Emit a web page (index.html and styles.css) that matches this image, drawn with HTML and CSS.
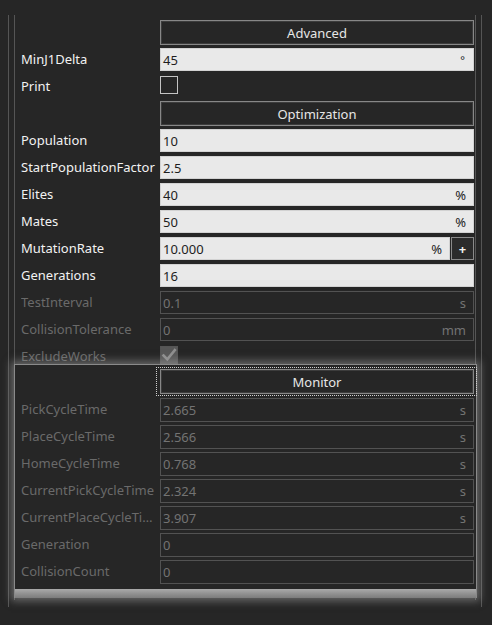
FILE: index.html
```html
<!DOCTYPE html>
<html>
<head>
<meta charset="utf-8">
<link rel="stylesheet" href="styles.css">
</head>
<body>
<div class="outer">
  <div class="inner">
    <div class="row">
      <div class="lbl"></div>
      <div class="hdr">Advanced</div>
    </div>
    <div class="row">
      <div class="lbl">MinJ1Delta</div>
      <div class="field light"><span class="val">45</span><span class="unit deg">°</span></div>
    </div>
    <div class="row">
      <div class="lbl">Print</div>
      <div class="cell"><div class="chk"></div></div>
    </div>
    <div class="row">
      <div class="lbl"></div>
      <div class="hdr">Optimization</div>
    </div>
    <div class="row">
      <div class="lbl">Population</div>
      <div class="field light"><span class="val">10</span></div>
    </div>
    <div class="row">
      <div class="lbl">StartPopulationFactor</div>
      <div class="field light"><span class="val">2.5</span></div>
    </div>
    <div class="row">
      <div class="lbl">Elites</div>
      <div class="field light"><span class="val">40</span><span class="unit">%</span></div>
    </div>
    <div class="row">
      <div class="lbl">Mates</div>
      <div class="field light"><span class="val">50</span><span class="unit">%</span></div>
    </div>
    <div class="row">
      <div class="lbl">MutationRate</div>
      <div class="cell split">
        <div class="field light grow"><span class="val">10.000</span><span class="unit">%</span></div>
        <div class="plus">+</div>
      </div>
    </div>
    <div class="row">
      <div class="lbl">Generations</div>
      <div class="field light"><span class="val">16</span></div>
    </div>
    <div class="row">
      <div class="lbl off">TestInterval</div>
      <div class="field dark"><span class="val">0.1</span><span class="unit">s</span></div>
    </div>
    <div class="row">
      <div class="lbl off">CollisionTolerance</div>
      <div class="field dark"><span class="val">0</span><span class="unit">mm</span></div>
    </div>
    <div class="row">
      <div class="lbl off">ExcludeWorks</div>
      <div class="cell">
        <div class="chk dis">
          <svg width="18" height="18" viewBox="0 0 18 18"><path d="M3.5 9.5 L7.3 13.3 L14.8 4.2" fill="none" stroke="#8f8f8f" stroke-width="2.6" stroke-linecap="square"/></svg>
        </div>
      </div>
    </div>

    <div class="panel">
      <div class="row prow-head">
        <div class="lbl"></div>
        <div class="hdr focus">Monitor</div>
      </div>
      <div class="row">
        <div class="lbl off">PickCycleTime</div>
        <div class="field dark tall"><span class="val">2.665</span><span class="unit">s</span></div>
      </div>
      <div class="row">
        <div class="lbl off">PlaceCycleTime</div>
        <div class="field dark tall"><span class="val">2.566</span><span class="unit">s</span></div>
      </div>
      <div class="row">
        <div class="lbl off">HomeCycleTime</div>
        <div class="field dark tall"><span class="val">0.768</span><span class="unit">s</span></div>
      </div>
      <div class="row">
        <div class="lbl off">CurrentPickCycleTime</div>
        <div class="field dark tall"><span class="val">2.324</span><span class="unit">s</span></div>
      </div>
      <div class="row">
        <div class="lbl off">CurrentPlaceCycleTime</div>
        <div class="field dark tall"><span class="val">3.907</span><span class="unit">s</span></div>
      </div>
      <div class="row">
        <div class="lbl off">Generation</div>
        <div class="field dark tall"><span class="val">0</span></div>
      </div>
      <div class="row">
        <div class="lbl off">CollisionCount</div>
        <div class="field dark tall"><span class="val">0</span></div>
      </div>
      <div class="band"></div>
    </div>
  </div>
</div>
</body>
</html>
```
FILE: styles.css
```css
html, body {
  margin: 0;
  padding: 0;
  background: #262626;
}
body {
  width: 492px;
  height: 625px;
  overflow: hidden;
  font-family: "Noto Sans", "Open Sans", sans-serif;
  font-size: 13px;
}
.outer {
  margin: 15px 0 0 8px;
  width: 474px;
  height: 592px;
  border-left: 1px solid #555;
  border-right: 1px solid #555;
  padding: 0 5px;
  box-sizing: border-box;
}
.inner {
  border-left: 1px solid #555;
  border-right: 1px solid #555;
  padding-top: 4px;
  height: 581px;
}
.row {
  display: grid;
  grid-template-columns: 139px 314px;
  height: 27px;
  padding: 0 3px 0 6px;
  align-items: start;
}
.lbl {
  margin-top: 2px;
  height: 22px;
  line-height: 22px;
  color: #f2f2f2;
  white-space: nowrap;
  overflow: hidden;
  text-overflow: ellipsis;
  padding-right: 4px;
  min-width: 0;
}
.lbl.off { color: #6a6a6a; }
.hdr {
  margin-top: 1px;
  height: 25px;
  box-sizing: border-box;
  border: 1px solid #878787;
  box-shadow: inset 0 0 0 1px #3c3c3c;
  display: flex;
  align-items: center;
  justify-content: center;
  color: #e6e6e6;
  position: relative;
}
.field {
  margin-top: 2px;
  height: 23px;
  box-sizing: border-box;
  display: flex;
  align-items: center;
  justify-content: space-between;
  padding: 0 7px 0 2px;
}
.field.light {
  background: #e9e9e9;
  border: 1px solid #d2d2d2;
  color: #1e1e1e;
}
.field.dark {
  background: #262626;
  border: 1px solid #525252;
  color: #737373;
}
.field.tall { height: 24px; }
.unit { color: inherit; }
.deg { font-size: 11px; padding-right: 1px; }
.cell { margin-top: 2px; }
.split {
  display: flex;
  gap: 1px;
}
.split .field { margin-top: 0; }
.grow { flex: 1; }
.plus {
  width: 23px;
  height: 23px;
  box-sizing: border-box;
  border: 1px solid #8a8a8a;
  background: #2b2b2b;
  color: #f2f2f2;
  display: flex;
  align-items: center;
  justify-content: center;
  font-weight: bold;
  font-size: 13px;
}
.chk {
  margin-top: 1px;
  width: 18px;
  height: 18px;
  box-sizing: border-box;
  border: 1px solid #c4c4c4;
  background: #262626;
}
.chk.dis {
  border: 1px solid #555;
  background: #575757;
  position: relative;
}
.chk.dis svg {
  position: absolute;
  left: -1px;
  top: -1px;
}
.panel {
  margin: -6px -2px 0 -1px;
  border: 1px solid #8a8a8a;
  border-bottom: none;
  background: #262626;
  box-shadow: 0 0 8px 3px rgba(170, 170, 170, 0.5);
  position: relative;
  padding-top: 2px;
}
.panel .row {
  padding: 0 4px 0 6px;
}
.prow-head { height: 29px; }
.prow-head .hdr { margin-top: 2px; }
.focus::after {
  content: "";
  position: absolute;
  top: -3px;
  bottom: -3px;
  left: -5px;
  right: -4px;
  border: 1px dotted #d0d0d0;
}
.band {
  margin-top: 4px;
  height: 9px;
  background: linear-gradient(#aaaaaa, #929292 50%, #7c7c7c);
}
```
